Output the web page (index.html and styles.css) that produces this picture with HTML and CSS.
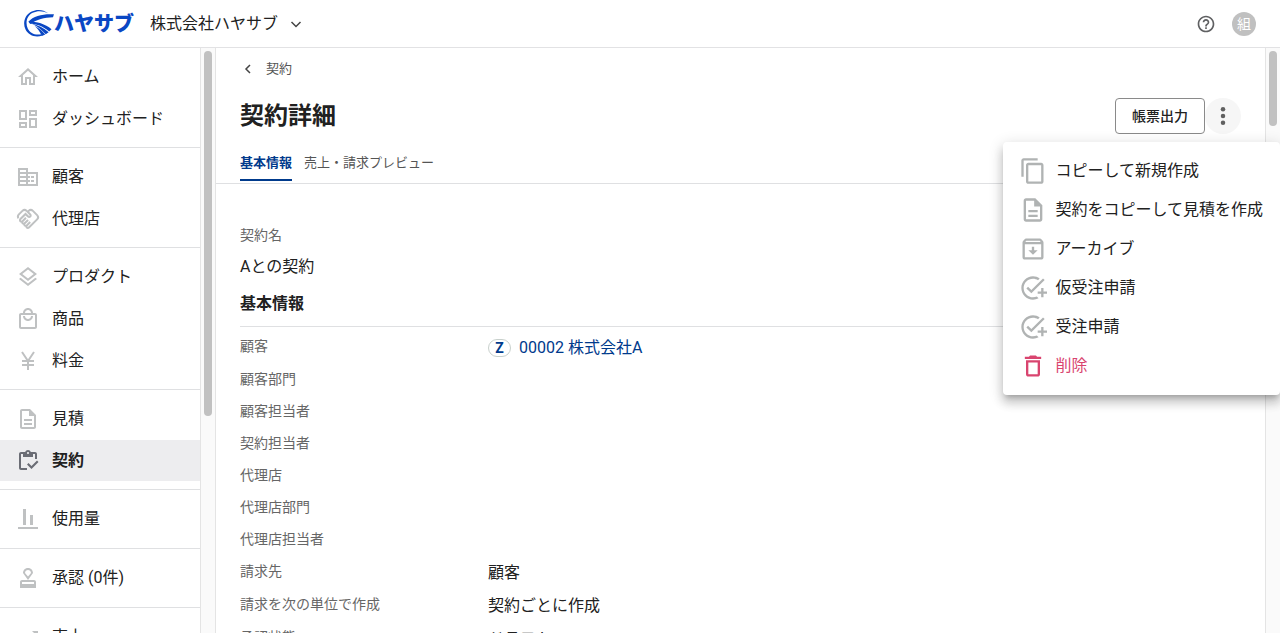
FILE: index.html
```html
<!DOCTYPE html>
<html lang="ja">
<head>
  <meta charset="UTF-8">
  <meta name="viewport" content="width=device-width,initial-scale=1">
  <title>契約詳細</title>
  <link rel="stylesheet" href="styles.css">
</head>
<body>

<header class="header">
  <a class="logo" href="#">
    <svg class="logo-mark" viewBox="0 0 32 30" aria-hidden="true">
      <path d="M26 4.5C21 .2 14 .1 9 2.500 1.500 6-.5 14.500 2.500 21 5.500 27.500 13 30 20 27.500L19 26C13 27.500 7.500 25.500 5 20.500 2 14 4 7 10 4 15 1.500 21 2 26 4.500z"/>
      <path d="M32 5.500C22 4.800 11 6.500 5.500 13.200L8 15.500C14 10.500 22 9 31 8.500z"/>
      <path d="M6 13C14 13 23 15.500 29.500 21L27 23.200C20.500 17.500 13 15.500 7 15z"/>
      <path d="M9 15.200C15 16.500 21.500 19.500 26.500 24L23.500 26C18.500 20.500 14 17.500 9 15.200z"/>
      <path d="M12 17.500C16.500 19.500 20.500 23 23 26.500L19.500 28C17.500 23.500 15 20 12 17.500z"/>
    </svg>
    <span class="logo-text">ハヤサブ</span>
  </a>
  <button class="company" type="button">
    株式会社ハヤサブ
    <svg class="chevron" viewBox="0 0 12 12" aria-hidden="true"><path d="M1.500 4L6 8.500 10.500 4"/></svg>
  </button>
  <div class="header-right">
    <button class="help" type="button" aria-label="ヘルプ">
      <svg class="icon-20" viewBox="0 0 24 24"><path d="M11 18h2v-2h-2v2zm1-16C6.480 2 2 6.480 2 12s4.480 10 10 10 10-4.480 10-10S17.520 2 12 2zm0 18c-4.410 0-8-3.590-8-8s3.590-8 8-8 8 3.590 8 8-3.590 8-8 8zm0-14c-2.210 0-4 1.790-4 4h2c0-1.100.9-2 2-2s2 .9 2 2c0 2-3 1.750-3 5h2c0-2.250 3-2.500 3-5 0-2.210-1.790-4-4-4z"/></svg>
    </button>
    <button class="avatar" type="button">組</button>
  </div>
</header>

<div class="layout">
  <nav class="sidebar">
    <div class="nav-group">
      <a class="nav-item" href="#"><svg class="icon" viewBox="0 0 24 24"><path d="M12 5.690l5 4.500V18h-2v-6H9v6H7v-7.810l5-4.500M12 3L2 12h3v8h6v-6h2v6h6v-8h3L12 3z"/></svg>ホーム</a>
      <a class="nav-item" href="#"><svg class="icon" viewBox="0 0 24 24"><path d="M19 5v2h-4V5h4M9 5v6H5V5h4m10 8v6h-4v-6h4M9 17v2H5v-2h4M21 3h-8v6h8V3zM11 3H3v10h8V3zm10 8h-8v10h8V11zm-10 4H3v6h8v-6z"/></svg>ダッシュボード</a>
    </div>
    <div class="nav-group">
      <a class="nav-item" href="#"><svg class="icon" viewBox="0 0 24 24"><path d="M12 7V3H2v18h20V7H12zM10 19H4v-2h6v2zm0-4H4v-2h6v2zm0-4H4V9h6v2zm0-4H4V5h6v2zm10 12h-8v-2h2v-2h-2v-2h2v-2h-2V9h8v10zm-2-8h-3v2h3v-2zm0 4h-3v2h3v-2z"/></svg>顧客</a>
      <a class="nav-item" href="#"><svg class="icon" viewBox="0 0 24 24"><path d="M12.220 19.850c-.18.18-.5.21-.71 0a.504.504 0 0 1 0-.71l3.390-3.390-1.410-1.410-3.390 3.390c-.19.2-.51.19-.71 0a.504.504 0 0 1 0-.71l3.390-3.390-1.410-1.410-3.390 3.390c-.18.18-.5.21-.71 0a.513.513 0 0 1 0-.71l3.390-3.390-1.420-1.410-3.390 3.390c-.18.18-.5.21-.71 0a.513.513 0 0 1 0-.71L9.520 8.400l1.870 1.860c.95.95 2.590.94 3.540 0 .98-.98.98-2.560 0-3.540l-1.860-1.860.28-.28c.78-.78 2.050-.78 2.830 0l4.240 4.240c.78.78.78 2.050 0 2.830l-8.200 8.200zm9.610-6.780a4.008 4.008 0 0 0 0-5.660l-4.240-4.240a4.008 4.008 0 0 0-5.660 0l-.28.28-.28-.28a4.008 4.008 0 0 0-5.660 0L2.170 6.710a3.992 3.992 0 0 0-.4 5.190l1.450-1.450a2 2 0 0 1 .37-2.330l3.540-3.540c.78-.78 2.050-.78 2.830 0l3.560 3.560c.18.18.21.5 0 .71-.21.21-.53.18-.71 0L9.520 5.570l-5.800 5.790c-.98.97-.98 2.560 0 3.540.39.39.89.63 1.420.7a2.458 2.458 0 0 0 2.120 2.120 2.458 2.458 0 0 0 2.120 2.120c.07.54.31 1.030.7 1.420.47.47 1.100.73 1.770.73.67 0 1.300-.26 1.770-.73l8.210-8.190z"/></svg>代理店</a>
    </div>
    <div class="nav-group">
      <a class="nav-item" href="#"><svg class="icon" viewBox="0 0 24 24"><path d="M11.990 18.540l-7.370-5.730L3 14.070l9 7 9-7-1.630-1.270zM12 16l7.360-5.730L21 9l-9-7-9 7 1.630 1.270L12 16zm0-11.470L17.740 9 12 13.470 6.260 9 12 4.530z"/></svg>プロダクト</a>
      <a class="nav-item" href="#"><svg class="icon" viewBox="0 0 24 24"><path d="M19 6h-2c0-2.760-2.240-5-5-5S7 3.240 7 6H5c-1.100 0-2 .9-2 2v12c0 1.100.9 2 2 2h14c1.100 0 2-.9 2-2V8c0-1.100-.9-2-2-2zm-7-3c1.660 0 3 1.340 3 3H9c0-1.660 1.340-3 3-3zm7 17H5V8h14v12zm-7-8c-1.660 0-3-1.340-3-3H7c0 2.760 2.240 5 5 5s5-2.240 5-5h-2c0 1.660-1.340 3-3 3z"/></svg>商品</a>
      <a class="nav-item" href="#"><svg class="icon line" viewBox="0 0 24 24"><path d="M6 3l6 9 6-9M12 12v9M6 12h12M6 16h12"/></svg>料金</a>
    </div>
    <div class="nav-group">
      <a class="nav-item" href="#"><svg class="icon" viewBox="0 0 24 24"><path d="M8 16h8v2H8zm0-4h8v2H8zm6-10H6c-1.100 0-2 .9-2 2v16c0 1.100.9 2 2 2h12c1.100 0 2-.9 2-2V8l-6-6zm4 18H6V4h7v5h5v11z"/></svg>見積</a>
      <a class="nav-item active" href="#" aria-current="page"><svg class="icon" viewBox="0 0 24 24"><path d="M5 5h2v3h10V5h2v5h2V5c0-1.100-.9-2-2-2h-4.180C14.400 1.840 13.300 1 12 1s-2.400.84-2.820 2H5c-1.100 0-2 .9-2 2v14c0 1.100.9 2 2 2h6v-2H5V5zm7-2c.55 0 1 .45 1 1s-.45 1-1 1-1-.45-1-1 .45-1 1-1z"/><path d="M21 11.500L15.510 17l-3.010-3-1.500 1.500 4.510 4.500L22.500 13z"/></svg>契約</a>
    </div>
    <div class="nav-group nav-single">
      <a class="nav-item" href="#"><svg class="icon" viewBox="0 0 24 24"><path d="M2 20h20v2H2zM7 2h3v16H7zM14 8h3v10h-3z"/></svg>使用量</a>
    </div>
    <div class="nav-group nav-single">
      <a class="nav-item" href="#"><svg class="icon" viewBox="0 0 24 24"><path d="M4 16v6h16v-6c0-1.100-.9-2-2-2H6c-1.100 0-2 .9-2 2zm14 2H6v-2h12v2zM12 2C9.540 2 7 3.900 7 7l5 7 5-7c0-3.100-2.540-5-5-5zm0 8.500L9 7c0-2 1.500-3 3-3s3 1 3 3l-3 3.500z"/></svg>承認 (0件)</a>
    </div>
    <div class="nav-group nav-single">
      <a class="nav-item" href="#"><svg class="icon" viewBox="0 0 24 24"><path d="M16 6l2.290 2.290-4.880 4.880-4-4L2 16.590 3.410 18l6-6 4 4 6.300-6.290L22 12V6z"/></svg>売上</a>
    </div>
  </nav>
  <div class="scrollbar"><div class="thumb thumb-nav"></div></div>

  <main class="main">
    <a class="back" href="#">
      <svg class="chevron" viewBox="0 0 12 12" aria-hidden="true"><path d="M8 2L4 6 8 10"/></svg>
      契約
    </a>
    <div class="title-row">
      <h1 class="title">契約詳細</h1>
      <div class="actions">
        <button class="btn" type="button">帳票出力</button>
        <button class="more" type="button" aria-label="メニュー" aria-expanded="true">
          <svg class="icon" viewBox="0 0 24 24"><circle cx="12" cy="4" r="2.700"/><circle cx="12" cy="12" r="2.700"/><circle cx="12" cy="20" r="2.700"/></svg>
        </button>
      </div>
    </div>
    <div class="tabs">
      <a class="tab tab-active" href="#">基本情報</a>
      <a class="tab" href="#">売上・請求プレビュー</a>
    </div>

    <section class="content">
      <dl class="name">
        <dt>契約名</dt>
        <dd>Aとの契約</dd>
      </dl>
      <h2 class="section-title">基本情報</h2>
      <dl class="fields">
        <div class="field has-value"><dt>顧客</dt><dd><span class="badge">Z</span><a href="#">00002 株式会社A</a></dd></div>
        <div class="field"><dt>顧客部門</dt><dd></dd></div>
        <div class="field"><dt>顧客担当者</dt><dd></dd></div>
        <div class="field"><dt>契約担当者</dt><dd></dd></div>
        <div class="field"><dt>代理店</dt><dd></dd></div>
        <div class="field"><dt>代理店部門</dt><dd></dd></div>
        <div class="field"><dt>代理店担当者</dt><dd></dd></div>
        <div class="field has-value"><dt>請求先</dt><dd>顧客</dd></div>
        <div class="field has-value"><dt>請求を次の単位で作成</dt><dd>契約ごとに作成</dd></div>
        <div class="field has-value"><dt>承認状態</dt><dd>ドラフト</dd></div>
      </dl>
    </section>
  </main>
  <div class="scrollbar scrollbar-main"><div class="thumb thumb-main"></div></div>

  <div class="menu" role="menu">
    <button class="menu-item" type="button" role="menuitem"><svg class="icon-28" viewBox="0 0 24 24"><path d="M16 1H4c-1.100 0-2 .9-2 2v14h2V3h12V1zm3 4H8c-1.100 0-2 .9-2 2v14c0 1.100.9 2 2 2h11c1.100 0 2-.9 2-2V7c0-1.100-.9-2-2-2zm0 16H8V7h11v14z"/></svg>コピーして新規作成</button>
    <button class="menu-item" type="button" role="menuitem"><svg class="icon-28" viewBox="0 0 24 24"><path d="M8 16h8v2H8zm0-4h8v2H8zm6-10H6c-1.100 0-2 .9-2 2v16c0 1.100.9 2 2 2h12c1.100 0 2-.9 2-2V8l-6-6zm4 18H6V4h7v5h5v11z"/></svg>契約をコピーして見積を作成</button>
    <button class="menu-item" type="button" role="menuitem"><svg class="icon-28" viewBox="0 0 24 24"><path d="M20.540 5.230l-1.390-1.680C18.880 3.210 18.470 3 18 3H6c-.47 0-.88.21-1.160.55L3.460 5.230C3.170 5.570 3 6.020 3 6.500V19c0 1.100.9 2 2 2h14c1.100 0 2-.9 2-2V6.500c0-.48-.17-.93-.46-1.270zM6.240 5h11.520l.83 1H5.420l.82-1zM5 19V8h14v11H5zm8-9h-2v3H8l4 4 4-4h-3z"/></svg>アーカイブ</button>
    <button class="menu-item" type="button" role="menuitem"><svg class="icon-28" viewBox="0 0 24 24"><path d="M22 5.180L10.590 16.600l-4.240-4.240 1.410-1.410 2.830 2.830 10-10L22 5.180zM12 20c-4.410 0-8-3.590-8-8s3.590-8 8-8c1.570 0 3.040.46 4.280 1.250l1.450-1.450C16.100 2.670 14.130 2 12 2 6.480 2 2 6.480 2 12s4.480 10 10 10c1.730 0 3.360-.44 4.780-1.220l-1.500-1.500c-1 .46-2.110.72-3.280.72zm7-5h-3v2h3v3h2v-3h3v-2h-3v-3h-2v3z"/></svg>仮受注申請</button>
    <button class="menu-item" type="button" role="menuitem"><svg class="icon-28" viewBox="0 0 24 24"><path d="M22 5.180L10.590 16.600l-4.240-4.240 1.410-1.410 2.830 2.830 10-10L22 5.180zM12 20c-4.410 0-8-3.590-8-8s3.590-8 8-8c1.570 0 3.040.46 4.280 1.250l1.450-1.450C16.100 2.670 14.130 2 12 2 6.480 2 2 6.480 2 12s4.480 10 10 10c1.730 0 3.360-.44 4.780-1.220l-1.500-1.500c-1 .46-2.110.72-3.280.72zm7-5h-3v2h3v3h2v-3h3v-2h-3v-3h-2v3z"/></svg>受注申請</button>
    <button class="menu-item danger" type="button" role="menuitem"><svg class="icon-28" viewBox="0 0 24 24"><path d="M16 9v10H8V9h8m-1.500-6h-5l-1 1H5v2h14V4h-3.500l-1-1zM18 7H6v12c0 1.100.9 2 2 2h8c1.100 0 2-.9 2-2V7z"/></svg>削除</button>
  </div>
</div>

</body>
</html>
```
FILE: styles.css
```css
* {
  box-sizing: border-box;
}

body {
  margin: 0;
  height: 100vh;
  display: flex;
  flex-direction: column;
  overflow: hidden;
  font-family: Roboto, "Noto Sans CJK JP", sans-serif;
  font-size: 16px;
  line-height: 24px;
  color: #212121;
  background: #fff;
}

button {
  font: inherit;
  color: inherit;
  background: none;
  border: none;
  padding: 0;
  cursor: pointer;
}

a {
  color: inherit;
  text-decoration: none;
}

dl,
dd {
  margin: 0;
}

svg {
  display: block;
  flex: none;
  fill: currentColor;
}

/* ヘッダー */
.header {
  flex: none;
  height: 48px;
  padding: 0 24px 0 23px;
  display: flex;
  align-items: center;
  border-bottom: 1px solid #e2e2e4;
}

.logo {
  display: flex;
  align-items: center;
  margin-right: 16px;
  color: #0a47c4;
}

.logo-mark {
  width: 31px;
  height: 29px;
}

.logo-text {
  font-size: 20px;
  font-weight: 900;
}

.company {
  display: flex;
  align-items: center;
  gap: 12px;
}

.chevron {
  width: 12px;
  height: 12px;
  fill: none;
  stroke: #444;
  stroke-width: 1.5;
}

.header-right {
  margin-left: auto;
  display: flex;
  align-items: center;
  gap: 16px;
}

.help {
  color: #5f6062;
}

.icon-20 {
  width: 20px;
  height: 20px;
}

.avatar {
  width: 24px;
  height: 24px;
  border-radius: 50%;
  background: #c0c0c0;
  color: #fff;
  font-size: 14px;
  line-height: 24px;
}

.layout {
  flex: 1;
  min-height: 0;
  display: flex;
  position: relative;
}

/* サイドバー */
.sidebar {
  flex: none;
  width: 200px;
  overflow: hidden;
}

.nav-group {
  display: flex;
  flex-direction: column;
  gap: 1px;
  padding: 8px 0;
  border-bottom: 1px solid #dfe0e2;
}

.nav-single {
  padding-bottom: 9px;
}

.nav-item {
  display: flex;
  align-items: center;
  gap: 12px;
  height: 41px;
  padding: 0 16px;
}

.icon {
  width: 24px;
  height: 24px;
}

.nav-item .icon {
  color: #bfc1c2;
}

.line {
  fill: none;
  stroke: currentColor;
  stroke-width: 2;
}

.active {
  background: #ededef;
  font-weight: 700;
}

.nav-item.active .icon {
  color: #6b6d75;
}

.scrollbar {
  flex: none;
  width: 16px;
  padding: 3px;
  background: #fafafa;
  border-left: 1px solid #e4e4e4;
  border-right: 1px solid #e4e4e4;
}

.scrollbar-main {
  width: 15px;
  border-right: none;
}

.thumb {
  width: 8px;
  border-radius: 4px;
  background: #c1c1c1;
}

.thumb-nav {
  height: 63%;
}

.thumb-main {
  height: 13%;
}

/* 契約詳細 */
.main {
  flex: 1;
  min-width: 0;
  overflow: hidden;
}

.back {
  display: flex;
  align-items: center;
  gap: 12px;
  padding: 9px 24px 0 26px;
  font-size: 13px;
  color: #555;
}

.title-row {
  display: flex;
  align-items: center;
  justify-content: space-between;
  padding: 17px 24px 0;
}

.title {
  margin: 0;
  font-size: 24px;
  line-height: 36px;
  font-weight: 700;
}

.actions {
  display: flex;
}

.btn {
  height: 36px;
  padding: 0 16px;
  border: 1px solid #8a8a8a;
  border-radius: 4px;
  font-size: 14px;
  font-weight: 500;
}

.more {
  width: 36px;
  height: 36px;
  display: flex;
  align-items: center;
  justify-content: center;
  border-radius: 50%;
  background: #f6f6f6;
  color: #606060;
}

.more .icon {
  width: 20px;
  height: 20px;
}

.tabs {
  display: flex;
  gap: 12px;
  padding: 17px 24px 2px;
  border-bottom: 1px solid #dfe0e2;
}

.tab {
  padding-bottom: 4px;
  border-bottom: 2px solid transparent;
  font-size: 13px;
  color: #555;
}

.tab-active {
  border-color: #003a8c;
  color: #003a8c;
  font-weight: 700;
}

.content {
  padding: 39px 24px 0;
}

dt {
  font-size: 14px;
  color: #666;
}

.name dd {
  padding-top: 8px;
}

.section-title {
  margin: 0 0 7px;
  padding: 13px 0 10px;
  border-bottom: 1px solid #dfe0e2;
  font-size: 16px;
  font-weight: 700;
}

.field {
  display: grid;
  grid-template-columns: 248px 1fr;
  min-height: 32px;
}

.has-value {
  min-height: 33px;
}

.field dd {
  display: flex;
  align-items: center;
  gap: 8px;
  height: 28px;
}

.field a {
  color: #003a8c;
}

.badge {
  width: 23px;
  height: 18px;
  border: 1px solid #c8d0cc;
  border-radius: 9px;
  text-align: center;
  font-size: 14px;
  line-height: 16px;
  font-weight: 700;
  color: #003a8c;
}

/* 操作メニュー */
.menu {
  position: absolute;
  top: 94px;
  right: 0;
  padding: 9px 0 10px;
  border-radius: 4px;
  background: #fff;
  box-shadow: 0 5px 5px -3px rgba(0, 0, 0, 0.2), 0 8px 10px 1px rgba(0, 0, 0, 0.14), 0 3px 14px 2px rgba(0, 0, 0, 0.12);
}

.menu-item {
  display: flex;
  align-items: center;
  gap: 8px;
  width: 100%;
  height: 39px;
  padding: 0 17px 0 16px;
}

.icon-28 {
  width: 28px;
  height: 28px;
  color: #b0b3b3;
}

.danger,
.danger .icon-28 {
  color: #d9446f;
}
```
